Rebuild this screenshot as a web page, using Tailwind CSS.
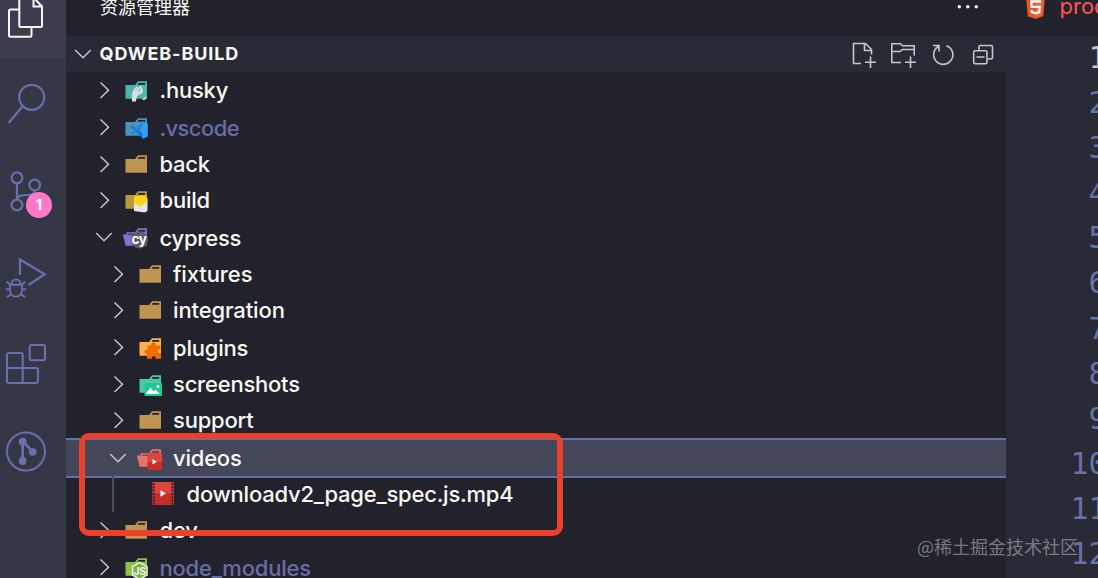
<!DOCTYPE html>
<html lang="zh-CN">
<head>
  <meta charset="UTF-8" />
  <meta name="viewport" content="width=device-width, initial-scale=1.0"/>
  <title>qdweb-build - Explorer</title>
  <script src="https://cdn.jsdelivr.net/npm/@tailwindcss/browser@4"></script>
</head>
<body class="relative flex w-[1098px] h-[578px] overflow-hidden bg-[#22222c] text-[#f8f8f2] font-['Inter','Noto_Sans_CJK_SC',sans-serif]">

  <!-- Shared shapes -->
  <svg class="hidden">
    <symbol id="right" viewBox="0 0 20 20"><path d="M6.5 2.5 14.5 10.2 6.5 18" fill="none" stroke="#c5c5ca" stroke-width="1.5"/></symbol>
    <symbol id="down" viewBox="0 0 20 20"><path d="M2.2 6 10 13.8 17.8 6" fill="none" stroke="#c5c5ca" stroke-width="1.5"/></symbol>
    <symbol id="shape" viewBox="0 0 28 28"><path fill-rule="evenodd" d="M4.5 9H14L17 5.2H26V22.8H4.5ZM17.6 7 16.6 8.8H24.2V7Z"/></symbol>
    <symbol id="open" viewBox="0 0 28 28"><path fill-rule="evenodd" d="M1.8 11.5H5.5V9.2H14L17 5.2H26V22.8H4.6ZM17.6 7 16.6 8.8H24.2V7ZM7 10.8V11.8H15V10.8Z"/></symbol>
  </svg>

  <!-- Activity bar -->
  <nav class="w-[66px] shrink-0 flex flex-col bg-[#343746]">
    <div class="h-[58px] mb-[2px] pl-1 bg-[#3d3c4e]">
      <svg class="size-11 -mt-[5px]" viewBox="0 0 44 44" fill="none" stroke="currentColor" stroke-width="2"><path d="M15 14.5H6.5Q5 14.5 5 16V40.200Q5 41.700 6.500 41.700H26Q27.500 41.700 27.500 40.200V32M15.300 3V30.500Q15.300 32 16.800 32H36.500Q38 32 38 30.500V11.500L30 3M29.500 2V11.500H38"/></svg>
    </div>
    <div class="h-[87px] pl-1 flex items-center">
      <svg class="size-11" viewBox="0 0 44 44" fill="none" stroke="#6a6fae" stroke-width="2.2"><circle cx="27.700" cy="15.300" r="12.500"/><path d="M18.700 24 4.700 41"/></svg>
    </div>
    <div class="relative h-[87px] pl-1 flex items-center">
      <svg class="size-11" viewBox="0 0 44 44" fill="none" stroke="#6a6fae" stroke-width="2.2"><circle cx="13" cy="8.800" r="5.400"/><circle cx="30.700" cy="16" r="5.400"/><circle cx="13" cy="36" r="5.400"/><path d="M13 14.500V30.500M30.700 21.500C30 25.500 28 26 23.500 26 17.500 26 13.500 26.500 13 30.500"/></svg>
      <span class="absolute left-[26px] top-[45px] size-[26px] rounded-full bg-[#ff79c6] text-white text-[15px] font-bold flex items-center justify-center">1</span>
    </div>
    <div class="h-[87px] pl-1 flex items-center">
      <svg class="size-11" viewBox="0 0 44 44" fill="none" stroke="#6a6fae" stroke-width="2.2"><path d="M16 19V3.500L40.700 18.200 24.500 29"/><path d="M7.500 28.700C7.500 21.700 16.500 21.700 16.500 28.700M6 28.700H18V33.500C18 43 6 43 6 33.500ZM6 28.500 2.700 25.500M18 28.500 21.300 25.500M6 33.300H2M18 33.300H22M7 38 3 41.300M17 38 21 41.300" stroke-width="1.900"/></svg>
    </div>
    <div class="h-[86px] pl-1 flex items-center">
      <svg class="size-11" viewBox="0 0 44 44" fill="none" stroke="#6a6fae" stroke-width="2.1"><rect x="25.700" y="3" width="15.300" height="15.300" rx="2"/><path d="M18.700 26V13Q18.700 11 16.700 11H5Q3 11 3 13V39Q3 41 5 41H32Q34 41 34 39V28Q34 26 32 26H3M18.700 26V41"/></svg>
    </div>
    <div class="h-[87px] pl-1 flex items-center">
      <svg class="size-11" viewBox="0 0 44 44" fill="none" stroke="#6a6fae" stroke-width="2"><circle cx="22" cy="22.500" r="19"/><path d="M18.700 13V32M18.700 12.500 28.700 22.500" stroke-width="2.600"/><g fill="#6a6fae" stroke="none"><circle cx="18.700" cy="12.700" r="3.900"/><circle cx="28.700" cy="22.800" r="3.900"/><circle cx="18.700" cy="32" r="3.900"/></g></svg>
    </div>
  </nav>

  <!-- Explorer -->
  <aside class="w-[940px] shrink-0 flex flex-col">
    <div class="h-9 shrink-0 pl-[34px] pr-[28px] flex justify-between">
      <h2 class="text-[18px] leading-[16px]">资源管理器</h2>
      <svg class="w-6 h-4" viewBox="0 0 24 16" fill="#f8f8f2"><circle cx="5.300" cy="6.700" r="1.700"/><circle cx="13.800" cy="6.700" r="1.700"/><circle cx="22.300" cy="6.700" r="1.700"/></svg>
    </div>
    <div class="h-9 shrink-0 pl-[7px] pr-2 flex items-center bg-[#282a36]">
      <svg class="size-5"><use href="#down"/></svg>
      <span class="ml-[6.5px] pb-[2px] text-[18px] font-bold tracking-[0.9px]">QDWEB-BUILD</span>
      <div class="ml-auto flex gap-3">
        <svg class="size-7" viewBox="0 0 28 28" fill="none" stroke="#c5c5ca" stroke-width="1.600"><path d="M11 23.500H3.500V3.500H15.500L21.500 9.500V14.500M14.500 3.500V10.500H21.500M20.500 16.500V28M15 22.300H26"/></svg>
        <svg class="size-7" viewBox="0 0 28 28" fill="none" stroke="#c5c5ca" stroke-width="1.600"><path d="M11 22.500H1.800V3.700H10.500L12.500 5.700H24.200V15.500M1.800 11.500H10L12.500 9.500H24.200M20.500 16.500V28M15 22.300H26"/></svg>
        <svg class="size-7" viewBox="0 0 28 28" fill="none" stroke="#c5c5ca" stroke-width="1.600"><path d="M16.500 5.700A9.600 9.600 0 1 1 8.700 6.300M3 5.500H9V11.500"/></svg>
        <svg class="size-7" viewBox="0 0 28 28" fill="none" stroke="#c5c5ca" stroke-width="1.600"><rect x="3.700" y="10.700" width="13.300" height="13" rx="1.500"/><path d="M8.900 10.500V7Q8.900 5.500 10.400 5.500H21Q22.500 5.500 22.500 7V17.500Q22.500 19 21 19H17.500M6.500 17H14.500"/></svg>
      </div>
    </div>

    <!-- File tree -->
    <ul class="text-[22px] font-[450] tracking-[-0.22px]">
      <li class="h-[36.67px] pl-7 flex items-center">
        <svg class="size-5 mr-[7px]"><use href="#right"/></svg>
        <svg class="size-7 mr-[10.5px]" viewBox="0 0 28 28"><use href="#shape" fill="#4db6ac"/><path d="M11 25.500C10.500 19 11 15.500 14 12L16 10 17 12 20 9.500 22 14 21 18C18 18 15.500 19 15 25.500ZM21 23.500Q25 25.500 25.500 20" fill="#d9dfe0"/><path d="M14.500 14.500 16 12.500M17.500 15.500 19.500 12.500" stroke="#4db6ac"/></svg>
        <span class="pt-px">.husky</span>
      </li>
      <li class="h-[36.67px] pl-7 flex items-center text-[#666ea6]">
        <svg class="size-5 mr-[7px]"><use href="#right"/></svg>
        <svg class="size-7 mr-[10.5px]" viewBox="0 0 28 28"><use href="#shape" fill="#4f94b8"/><path d="M9.500 13.500 11.200 12.200 22 20.500V25.800Z" fill="#1976d2"/><path d="M9.500 20.800 11.200 22.200 22 13.800V8.300Z" fill="#1e88e5"/><path d="M21.500 8.300 26.800 10.500V23.500L21.500 25.900Z" fill="#2fa3f5"/></svg>
        <span class="pt-[3px] tracking-[-0.6px]">.vscode</span>
      </li>
      <li class="h-[36.67px] pl-7 flex items-center">
        <svg class="size-5 mr-[7px]"><use href="#right"/></svg>
        <svg class="size-7 mr-[10.5px]"><use href="#shape" fill="#c09553"/></svg>
        <span class="pt-[2px]">back</span>
      </li>
      <li class="h-[36.67px] pl-7 flex items-center">
        <svg class="size-5 mr-[7px]"><use href="#right"/></svg>
        <svg class="size-7 mr-[10.5px]" viewBox="0 0 28 28"><use href="#shape" fill="#b89a3d"/><path d="M13 13 26.500 12V25L23.500 26.500 13 25Z" fill="#e6e6e6"/><path d="M13 10 25 9.500 26.500 16 19 20.500 13 17.500Z" fill="#fdd21c"/></svg>
        <span>build</span>
      </li>
      <li class="h-[36.67px] pl-7 flex items-center">
        <svg class="size-5 mr-[7px]"><use href="#down"/></svg>
        <svg class="size-7 mr-[10.5px]" viewBox="0 0 28 28"><use href="#open" fill="#7f72d1"/><circle cx="18.500" cy="17" r="8.500" fill="#5c5c62"/><text x="18" y="20.500" text-anchor="middle" font-size="13.500" font-weight="700" letter-spacing="-0.5" fill="#fff">cy</text></svg>
        <span class="pt-[3px]">cypress</span>
      </li>
      <li class="h-[36.67px] pl-[41.5px] flex items-center">
        <svg class="size-5 mr-[7px]"><use href="#right"/></svg>
        <svg class="size-7 mr-[10.5px]"><use href="#shape" fill="#c09553"/></svg>
        <span class="pt-[2px] tracking-[-0.1px]">fixtures</span>
      </li>
      <li class="h-[36.67px] pl-[41.5px] flex items-center">
        <svg class="size-5 mr-[7px]"><use href="#right"/></svg>
        <svg class="size-7 mr-[10.5px]"><use href="#shape" fill="#c09553"/></svg>
        <span class="tracking-[-0.12px]">integration</span>
      </li>
      <li class="h-[36.67px] pl-[41.5px] flex items-center">
        <svg class="size-5 mr-[7px]"><use href="#right"/></svg>
        <svg class="size-7 mr-[10.5px]" viewBox="0 0 28 28"><use href="#shape" fill="#ffb04c"/><path d="M12.500 12.500H16.500C15 8.500 22 8.500 20.500 12.500H25.500V16.500C21.800 15.500 21.800 21 26 20V25.800H20.500C21.500 22.500 16 22.500 17 25.800H12V20.500C8.500 22 8.500 15.500 12.500 17Z" fill="#ef6c00"/></svg>
        <span class="pt-[3px]">plugins</span>
      </li>
      <li class="h-[36.67px] pl-[41.5px] flex items-center">
        <svg class="size-5 mr-[7px]"><use href="#right"/></svg>
        <svg class="size-7 mr-[10.5px]" viewBox="0 0 28 28"><use href="#shape" fill="#4cc9a0"/><path d="M9.500 13H27V26H9.500Z" fill="#1fc890"/><path d="M10.500 24 15.500 17.500 18.500 21.500 20.500 19.500 25 24Z" fill="#fff"/><circle cx="23" cy="16.500" r="1.500" fill="#fff"/></svg>
        <span class="pt-[2px]">screenshots</span>
      </li>
      <li class="h-[36.67px] pl-[41.5px] flex items-center">
        <svg class="size-5 mr-[7px]"><use href="#right"/></svg>
        <svg class="size-7 mr-[10.5px]"><use href="#shape" fill="#c09553"/></svg>
        <span>support</span>
      </li>
      <li class="h-10 -mt-px -mb-[2.33px] pl-[41.5px] flex items-center bg-[#44475a] border-y-2 border-[#6272a4]">
        <svg class="size-5 mr-[7px]"><use href="#down"/></svg>
        <svg class="size-7 mr-[10.5px]" viewBox="0 0 28 28"><use href="#open" fill="#e5736f"/><path d="M12.500 9H26Q27 9 27 10V25Q27 26 26 26H13.500Q12.500 26 12.500 25Z" fill="#e0443e"/><path d="M12.500 18H27V25Q27 26 26 26H13.500Q12.500 26 12.500 25Z" fill="#c62f2b"/><path d="M17.500 15 22 17.700 17.500 20.400Z" fill="#fff"/></svg>
        <span class="pt-[2px]">videos</span>
      </li>
      <li class="h-[36.67px] pl-[46px] flex items-center">
        <span class="w-[2px] h-full mr-[34px] bg-[#4d4e57]"></span>
        <svg class="size-7 mr-[10.5px]" viewBox="0 0 28 28"><path d="M4.500 2H25.700V25H4.500Z" fill="#dd4540"/><path d="M4.500 13.500H25.700V25H4.500Z" fill="#c22f2b"/><path d="M6 3V24.500M24.200 3V24.500" stroke="#3a1f28" stroke-width="1.700" stroke-dasharray="2 1.300"/><path d="M12.500 10.300 18 13.500 12.500 16.700Z" fill="#fff"/></svg>
        <span class="pt-[2px]">downloadv2_page_spec.js.mp4</span>
      </li>
      <li class="h-[36.67px] pl-7 flex items-center">
        <svg class="size-5 mr-[7px]"><use href="#right"/></svg>
        <svg class="size-7 mr-[10.5px]"><use href="#shape" fill="#c09553"/></svg>
        <span>dev</span>
      </li>
      <li class="h-[36.67px] pl-7 flex items-center text-[#666ea6]">
        <svg class="size-5 mr-[7px]"><use href="#right"/></svg>
        <svg class="size-7 mr-[10.5px]" viewBox="0 0 28 28"><use href="#shape" fill="#8bc34a"/><path d="M18.500 9.500 26 13.700V22L18.500 26.300 11.500 22V13.700Z" fill="#7cb342" stroke="#eef5e6" stroke-width="1.500"/><text x="18.700" y="21.500" text-anchor="middle" font-size="10.500" font-weight="600" fill="#fff">JS</text></svg>
        <span class="pt-[3px]">node_modules</span>
      </li>
    </ul>
  </aside>

  <!-- Editor -->
  <main class="w-[92px] shrink-0 bg-[#282a36]">
    <div class="h-9 pl-5 flex bg-[#22222c] overflow-hidden">
      <svg class="w-[19px] h-[22px] shrink-0 -mt-[3px]" viewBox="0 0 19 22"><path d="M0 0H19L17.300 19.300 9.500 22 1.700 19.300Z" fill="#e4552b"/><path d="M9.500 1V20.300L15.800 18.300 17.200 1Z" fill="#f16a36"/><path d="M15 4.500H5.300L5.700 9.800H13.700L13.200 15.200 9.500 16.400 5.800 15.200 5.600 13" fill="none" stroke="#fff" stroke-width="2.300"/></svg>
      <span class="ml-[14.5px] -mt-[7px] text-[22px] leading-[27px] text-[#ff5555]">prod</span>
    </div>
    <ol class="-mt-px w-[100.5px] text-right font-['DejaVu_Sans_Mono',monospace] text-[30px] leading-[45.1px] text-[#6672a8]">
      <li class="text-[#c6c6c6]">1</li>
      <li>2</li>
      <li>3</li>
      <li>4</li>
      <li>5</li>
      <li>6</li>
      <li>7</li>
      <li>8</li>
      <li>9</li>
      <li>10</li>
      <li>11</li>
      <li>12</li>
    </ol>
  </main>

  <!-- Highlight frame and watermark -->
  <div class="absolute left-[79px] top-[433px] w-[484px] h-[103px] border-[6px] border-[#e9412a] rounded-[10px]"></div>
  <p class="absolute left-[917px] top-[534px] text-[18px] leading-6 text-white/40 whitespace-nowrap font-['Noto_Sans_CJK_SC',sans-serif]">@稀土掘金技术社区</p>
</body>
</html>
